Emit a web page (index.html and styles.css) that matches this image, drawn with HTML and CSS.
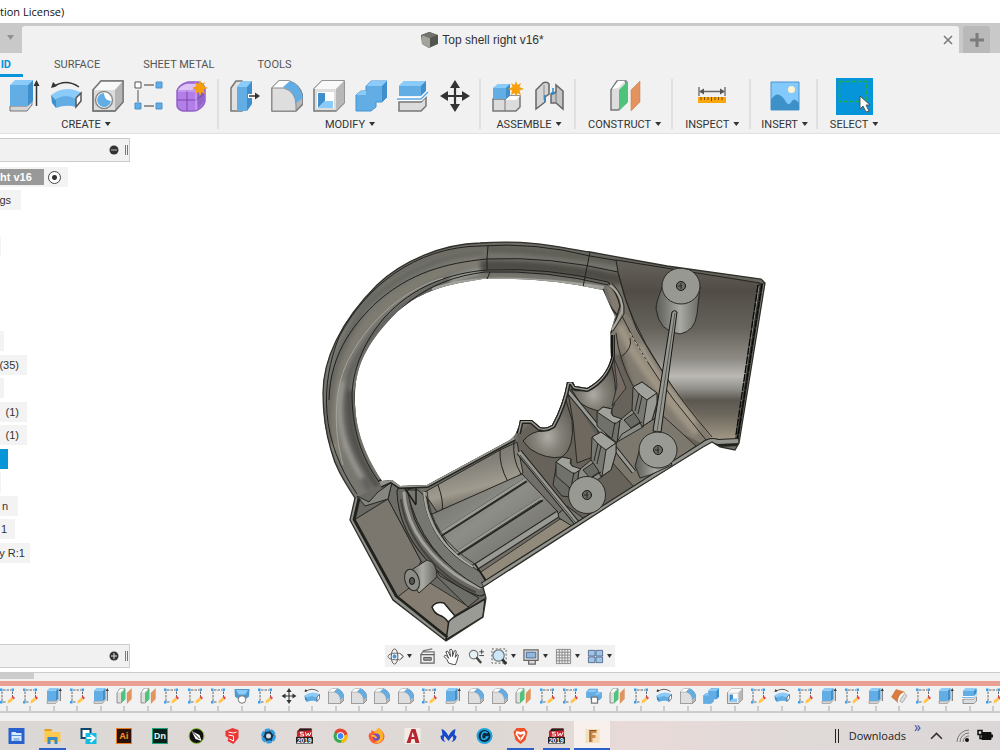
FILE: index.html
```html
<!DOCTYPE html>
<html lang="en">
<head>
<meta charset="utf-8">
<title>Top shell right v16*</title>
<link rel="stylesheet" href="styles.css">
</head>
<body>
<svg class="defs" aria-hidden="true">
  <defs>
    <symbol id="extrude" viewBox="0 0 32 32"><path d="M2 26h17l5-6v5l-5 6H2z" fill="#d5d5d5" stroke="#777"/><path d="M2 5h18v21H2z" fill="#63ade5"/><path d="M2 5l5-5h18l-5 5z" fill="#8bcbfa"/><path d="M20 5l5-5v21l-5 5z" fill="#3f8fcc"/><path d="M28.500 26V4" stroke="#333" stroke-width="1.500"/><path d="M25.500 6l3-6 3 6z" fill="#333"/></symbol>
    <symbol id="revolve" viewBox="0 0 32 32"><path d="M3 7Q16-2 29 7" fill="none" stroke="#333" stroke-width="1.500"/><path d="M1 8l2-6 4 4z" fill="#333"/><path d="M1 15Q15 4 32 13L26 19Q16 14 6 20z" fill="#8bcbfa"/><path d="M1 15l5 5v8l-4-5z" fill="#3f8fcc"/><path d="M6 19Q16 13 26 19v8Q16 24 6 28z" fill="#63ade5"/><path d="M26 18l5-5v8l-5 6z" fill="#fff" stroke="#555" stroke-width="1.500"/></symbol>
    <symbol id="hole" viewBox="0 0 32 32"><path d="M1 10l8-9h22v21l-8 9H1z" fill="#dcdcdc" stroke="#777" stroke-width="1.500"/><path d="M1 10l8-9h22l-8 9z" fill="#f8f8f8"/><path d="M23 10l8-9v21l-8 9z" fill="#b5b5b5"/><path d="M1 10l8-9h22v21l-8 9H1z" fill="none" stroke="#777" stroke-width="1.300"/><circle cx="12" cy="20" r="8.500" fill="#fff" stroke="#888" stroke-width="1.500"/><path d="M12 13a7 7 0 1 0 7 8q-7-1-7-8" fill="#63ade5"/></symbol>
    <symbol id="pattern" viewBox="0 0 32 32"><path d="M4 10v12M10 5h10M10 26h10" stroke="#777" stroke-width="1.300"/><path d="M1 2h6v6H1z" fill="#fff" stroke="#555"/><path d="M22 2h6v6h-6zM1 23h6v6H1zM22 23h6v6h-6z" fill="#63ade5" stroke="#4b92cb"/></symbol>
    <symbol id="star" viewBox="0 0 16 16"><path d="M8 0l1.500 4L13 2l-1.500 4L16 8l-4.500 1.500L13 14l-3.500-2L8 16l-1.500-4L3 14l1-4.500L0 8l4.500-2L3 2l3.500 2z" fill="#f6a00e"/></symbol>
    <symbol id="form" viewBox="0 0 32 32"><path d="M1 11q1-4 6-7l5-2h10q5 1 7 6v13q-1 5-6 8-2 2-6 2H7q-5-1-6-5z" fill="#b27ee8" stroke="#9361c5" stroke-width="1.500"/><path d="M2 10q2-4 8-6h12l-5 6z" fill="#ddc4f7"/><path d="M21 13l7-6v14l-6 8z" fill="#9264c8"/><path d="M11 10v21M1 20h19l8-6" stroke="#7c47ac" fill="none"/><path d="M20 10v20M2 11h18" stroke="#d4b2f7" fill="none"/><use href="#star" x="16" y="0" width="16" height="16"/></symbol>
    <symbol id="press" viewBox="0 0 32 32"><path d="M2 8l5-7h6v30H2z" fill="#e1e1e1" stroke="#777" stroke-width="1.500"/><path d="M8 7l5-6h10l-5 6v24H8z" fill="#63ade5"/><path d="M8 7l5-6h10l-5 6z" fill="#8bcbfa"/><path d="M18 7l5-6v23l-5 7z" fill="#3f8fcc"/><path d="M19 16h8" stroke="#fff" stroke-width="4"/><path d="M20 16h8" stroke="#333" stroke-width="1.500"/><path d="M26 12.500l5 3.500-5 3.500z" fill="#333"/></symbol>
    <symbol id="fillet" viewBox="0 0 32 32"><path d="M1 8l7-7h10q13 5 14 18v5l-7 7H1z" fill="#b9b9b9" stroke="#777" stroke-width="1.500"/><path d="M1 8l7-7h11l-7 7z" fill="#fff"/><path d="M1 8h12q12 4 12 17v6H1z" fill="#dedede" stroke="#888"/><path d="M12 7l7-6q11 4 13 17l-7 5Q24 11 12 7" fill="#63ade5"/></symbol>
    <symbol id="shell" viewBox="0 0 32 32"><path d="M1 9l8-8h22v22l-8 8H1z" fill="#dedede" stroke="#777" stroke-width="1.500"/><path d="M1 9l8-8h22l-8 8z" fill="#f9f9f9"/><path d="M23 9l8-8v22l-8 8z" fill="#b8b8b8"/><path d="M4 12h17v16H4z" fill="#fff"/><path d="M5 13h7v8l-7 7z" fill="#3f8fcc"/><path d="M5 28l7-7h8v7z" fill="#8bcbfa"/></symbol>
    <symbol id="combine" viewBox="0 0 32 32"><path d="M1 15l5-4h5V6l5-5h16v16l-5 5h-6v5l-5 4H1z" fill="#63ade5" stroke="#4594cf"/><path d="M11 6l5-5h16l-5 5zM1 15l5-4h5v4z" fill="#8bcbfa"/><path d="M27 6l5-5v16l-5 5z" fill="#3f8fcc"/></symbol>
    <symbol id="split" viewBox="0 0 32 32"><path d="M2 6l5-5h22v10l-5 5H2z" fill="#63ade5"/><path d="M2 6l5-5h22l-5 5z" fill="#8bcbfa"/><path d="M24 6l5-5v10l-5 5z" fill="#3f8fcc"/><path d="M2 22h22l5-5v9l-5 5H2z" fill="#dcdcdc" stroke="#777" stroke-width="1.500"/><path d="M0 19h24l7-7" fill="none" stroke="#fff" stroke-width="4"/><path d="M0 19h24l7-7" fill="none" stroke="#55a8e6" stroke-width="1.500"/></symbol>
    <symbol id="move" viewBox="0 0 32 32"><path d="M16 5v22M5 16h22" stroke="#333" stroke-width="2.200"/><path d="M16 0l5 8H11zM16 32l5-8H11zM1 16l8-5v10zM31 16l-8-5v10z" fill="#333"/></symbol>
    <symbol id="component" viewBox="0 0 32 32"><path d="M1 19h13l2-3h12v11l-4 4H1z" fill="#dcdcdc" stroke="#777" stroke-width="1.500"/><path d="M14 19l4-3h10l-4 4H14z" fill="#fff"/><path d="M13 19v12" stroke="#777"/><path d="M1 8l5-4h12v10l-4 5H1z" fill="#63ade5"/><path d="M1 8l5-4h12l-4 4z" fill="#8bcbfa"/><path d="M14 8l4-4v11l-4 4z" fill="#3f8fcc"/><use href="#star" x="16" y="1" width="16" height="16"/></symbol>
    <symbol id="joint" viewBox="0 0 32 32"><path d="M2 10l7-7q4-2 6 1v10l-4 3v5l-9 7z" fill="#d5d5d5" stroke="#666" stroke-width="1.500"/><path d="M10 5v15" stroke="#888" fill="none"/><path d="M17 14l5-2V5l7 6v18l-7-6h-5z" fill="#c4c4c4" stroke="#666" stroke-width="1.500"/><path d="M22 12v11" stroke="#777"/><path d="M11 15v7M19 8v7M17 13h5" stroke="#268ad0" stroke-width="1.500"/></symbol>
    <symbol id="plane" viewBox="0 0 32 32"><path d="M2 10l6-9h9v22l-8 7H2z" fill="#dedede" stroke="#777" stroke-width="1.500"/><path d="M9 8l7-7h-7l-6 8z" fill="#fff"/><path d="M10 10l9-9v21l-9 9z" fill="#4fc37a"/><path d="M22 10l9-9v21l-9 9z" fill="#e3935e" stroke="#ca7a46" stroke-width=".5"/></symbol>
    <symbol id="measure" viewBox="0 0 32 32"><path d="M3 7v9M29 7v9M6 11.500h20" stroke="#666" stroke-width="1.300"/><path d="M3 11.500l5-3v6zM29 11.500l-5-3v6z" fill="#555"/><path d="M2 17h28v6H2z" fill="#f9a70a"/><path d="M5 17v3M8.500 17v3M12 17v3M15.500 17v4M19 17v3M22.500 17v3M26 17v3" stroke="#795000"/></symbol>
    <symbol id="picture" viewBox="0 0 32 32"><path d="M2 2h28v28H2z" fill="#83c9fb" stroke="#4b95cd"/><circle cx="22.500" cy="9.500" r="3.500" fill="#fff2ce"/><path d="M2 20Q9 8 17 22q3 5 6-1 2-4 7 2v7H2z" fill="#3d90c8"/></symbol>
    <symbol id="select" viewBox="0 0 37 37"><path d="M0 0h37v37H0z" fill="#0795d9"/><path d="M3.500 3.500h27v20h-27z" fill="none" stroke="#1fae50" stroke-width="1.500" stroke-dasharray="4 2"/><path d="M24 18v13l3-3 3 6 3-1-3-6h4z" fill="#fff" stroke="#555"/></symbol>
    <symbol id="sketch" viewBox="0 0 32 32"><path d="M6 7v19M8 4h16M8 28h7M27 7v12" stroke="#666" stroke-width="2" stroke-dasharray="5 2"/><path d="M2 1h5v5H2zM25 1h5v5h-5zM2 26h5v5H2z" fill="#39a0f0"/><path d="M17 31l1-6 7-6 4 4-7 6z" fill="#ffc54b"/><path d="M25 18l3-2 4 4-3 3z" fill="#ed3e43"/></symbol>
    <symbol id="funnel" viewBox="0 0 32 32"><path d="M1 2h30l-1 15-5 4H7l-5-4z" fill="#4d98ce"/><path d="M4 4l5 9h14l5-9z" fill="#8bcbfa"/><circle cx="16" cy="23" r="7.500" fill="#fff" stroke="#777" stroke-width="2"/></symbol>
    <symbol id="cut" viewBox="0 0 32 32"><path d="M1 8l5-6h17v7h8v11l-5 4H10l-1-5H1z" fill="#63ade5" stroke="#438fca"/><path d="M2 8l5-5h15l-4 5zM17 13l5-4h8l-4 4z" fill="#8bcbfa"/><path d="M11 18h12v12H11z" fill="#fff" stroke="#777" stroke-width="2.500"/></symbol>
    <symbol id="offset" viewBox="0 0 32 32"><path d="M17 26l10-15q5 2 4 6l-8 12z" fill="#ddd" stroke="#777"/><path d="M1 18L10 3l17 5-9 9-4 12z" fill="#d87d42" stroke="#c36c35"/><path d="M15 28q0-12 11-18" fill="none" stroke="#fff" stroke-width="3"/></symbol>
    <linearGradient id="shellG" x1="0" y1="0" x2="0" y2="1"><stop offset="0" stop-color="#65625b"/><stop offset=".17" stop-color="#514d46"/><stop offset=".37" stop-color="#64615b"/><stop offset=".54" stop-color="#8d8a84"/><stop offset=".64" stop-color="#bbb9b4"/><stop offset=".71" stop-color="#8f8d88"/><stop offset=".77" stop-color="#5b5750"/><stop offset=".86" stop-color="#706a5f"/><stop offset="1" stop-color="#a79d8a"/></linearGradient>
    <linearGradient id="bossG" x1="0" x2="1"><stop offset="0" stop-color="#5e5d59"/><stop offset=".2" stop-color="#777772"/><stop offset=".55" stop-color="#a9aaa4"/><stop offset="1" stop-color="#686762"/></linearGradient>
    <linearGradient id="cylG" x1="0" y1="0" x2=".35" y2="1"><stop offset="0" stop-color="#67655e"/><stop offset=".45" stop-color="#83817a"/><stop offset=".75" stop-color="#a09b8f"/><stop offset="1" stop-color="#625d54"/></linearGradient>
    <linearGradient id="plateG" x1="0" y1="0" x2="1" y2="1"><stop offset="0" stop-color="#6b6a65"/><stop offset=".45" stop-color="#8d8e88"/><stop offset=".7" stop-color="#7b7a74"/><stop offset="1" stop-color="#5b5952"/></linearGradient>
    <radialGradient id="cupG" cx=".5" cy=".65" r=".65"><stop offset="0" stop-color="#aeada5"/><stop offset=".4" stop-color="#85827a"/><stop offset="1" stop-color="#5d5a53"/></radialGradient>
    <filter id="soft" x="-10%" y="-10%" width="120%" height="120%"><feGaussianBlur stdDeviation="2.200"/></filter>
    <clipPath id="bodyClip"><path clip-rule="evenodd" d="M323 393C323 360 340 322 377 285C402 261 442 244 480 243C535 239 565 249 590 252L667 266 761 279 765 283 739 443 735 450 720 447 712 442 703 447 618 500 483 587 486 598 483 617 446 641 393 600 350 520 355 498C342 478 335 466 331 450C325 430 323 415 323 393ZM355 393C356 363 370 339 397 312C423 289 450 284 483 279Q545 277 603 290L615 317 610 333 611 358Q606 378 587 388L575 386 573 382 567 382Q563 405 552 425Q546 429 540 427L532 420 520 420Q518 434 510 440L427 485 400 486 392 480 382 481C360 448 354 420 355 393Z"/></clipPath>
    <g id="clip" stroke="#292823" stroke-linejoin="round">
      <path d="M620 420l12-10 12 10-1 7-26 15z" fill="#8b8c86"/>
      <path d="M624 420l10-7 8 8-11 7z" fill="#696a64"/>
      <path d="M597 412l6-5 9 2 0 6 8 5-3 23-6-5-14-12z" fill="#70716b"/>
      <path d="M597 412l6-5 9 2-1 4 2 3 9 3-7 5z" fill="#a0a19a"/>
      <path d="M615 422l-3 16" fill="none"/>
      <path d="M633 387l9-5 15 11v10l-5 17-10 7-3-7-7-10z" fill="#787973"/>
      <path d="M633 387l9-5 15 11-10 7-8-6z" fill="#a0a19a"/>
      <path d="M647 400l10-7v10l-5 17-9 6z" fill="#989992"/>
      <path d="M639 393l-4 18M642 396l-4 18M617 442l5-8 20-12" fill="none"/>
    </g>
  </defs>
</svg>

<header class="titlebar">tion License)</header>

<div class="doc-tabs">
  <div class="quick"><button class="drop" aria-label="Redo options"></button></div>
  <div class="doc-tab">
    <h1 class="doc-title"><svg class="doc-icon" viewBox="0 0 17 16"><path d="M0 3l8-3 9 3v9l-9 4-7-4z" fill="#555550"/><path d="M1 3l8 3v10l-8-4z" fill="#a2a39b"/><path d="M1 3l8-3 7 3-7 3z" fill="#73736d"/></svg>Top shell right v16*</h1>
    <button class="close" aria-label="Close tab"><svg viewBox="0 0 10 10"><path d="M1 1l8 8M9 1L1 9" stroke="#777" stroke-width="1.500"/></svg></button>
  </div>
  <button class="new-tab" aria-label="New design"><svg viewBox="0 0 14 14"><path d="M7 0v14M0 7h14" stroke="#7c7c7c" stroke-width="3"/></svg></button>
</div>

<section class="ribbon">
  <nav class="modes"><button class="mode active">ID</button><button class="mode">SURFACE</button><button class="mode">SHEET METAL</button><button class="mode">TOOLS</button></nav>
  <div class="groups">
    <div class="group create"><div class="tools"><button aria-label="Extrude"><svg><use href="#extrude"/></svg></button><button aria-label="Revolve"><svg><use href="#revolve"/></svg></button><button aria-label="Hole"><svg><use href="#hole"/></svg></button><button aria-label="Pattern"><svg><use href="#pattern"/></svg></button><button aria-label="Create form"><svg><use href="#form"/></svg></button></div><button class="label">CREATE</button></div>
    <div class="group"><div class="tools"><button aria-label="Press pull"><svg><use href="#press"/></svg></button><button aria-label="Fillet"><svg><use href="#fillet"/></svg></button><button aria-label="Shell"><svg><use href="#shell"/></svg></button><button aria-label="Combine"><svg><use href="#combine"/></svg></button><button aria-label="Split body"><svg><use href="#split"/></svg></button><button aria-label="Move"><svg><use href="#move"/></svg></button></div><button class="label">MODIFY</button></div>
    <div class="group assemble"><div class="tools"><button aria-label="New component"><svg><use href="#component"/></svg></button><button aria-label="Joint"><svg><use href="#joint"/></svg></button></div><button class="label">ASSEMBLE</button></div>
    <div class="group wide"><div class="tools"><button aria-label="Offset plane"><svg><use href="#plane"/></svg></button></div><button class="label">CONSTRUCT</button></div>
    <div class="group wide"><div class="tools"><button aria-label="Measure"><svg><use href="#measure"/></svg></button></div><button class="label">INSPECT</button></div>
    <div class="group wide tight"><div class="tools"><button aria-label="Canvas image"><svg><use href="#picture"/></svg></button></div><button class="label">INSERT</button></div>
    <div class="group wide"><div class="tools large"><button aria-label="Select"><svg><use href="#select"/></svg></button></div><button class="label">SELECT</button></div>
  </div>
</section>

<main class="canvas">
  <aside class="side">
    <div class="panel-head"><button aria-label="Collapse browser"><svg viewBox="0 0 10 10"><circle cx="5" cy="5" r="4.500" fill="#333"/><path d="M2 5h6" stroke="#bbb"/></svg></button><i class="grip"></i></div>
    <ul class="tree">
      <li class="root"><b>ht v16</b><label><input type="radio" checked aria-label="Activate component"></label></li>
      <li class="w21">gs</li><li class="w0"></li><li class="w1"></li><li class="w0"></li><li class="w0"></li><li class="w0"></li><li class="w4"></li>
      <li class="w27">(35)</li><li class="w4"></li><li class="w27">(1)</li><li class="w27">(1)</li><li class="w8 picked"></li><li class="w1"></li><li class="w18">n</li><li class="w15">1</li><li class="w30">y R:1</li>
    </ul>
    <div class="panel-head comments"><button aria-label="Expand comments"><svg viewBox="0 0 10 10"><circle cx="5" cy="5" r="4.500" fill="#333"/><path d="M2 5h6M5 2v6" stroke="#ddd"/></svg></button><i class="grip"></i></div>
  </aside>
  <div class="stage">
    <svg class="model" viewBox="310 230 470 420" role="img" aria-label="Top shell right model">
      <g clip-path="url(#bodyClip)" stroke-linejoin="round">
        <path d="M310 230h470v420H310z" fill="#716e67"/>
        <!-- handle bands -->
        <path d="M357 500C290 390 332 340 377 290C405 266 445 251 483 249Q550 247 620 263L600 295Q540 275 483 279C440 283 370 320 355 393Q356 440 385 485z" fill="#777770"/>
        <g fill="none" filter="url(#soft)">
          <path d="M480 266Q550 264 622 280" stroke="#4e4c45" stroke-width="11"/>
          <path d="M487 249Q550 248 760 285" stroke="#5f5e57" stroke-width="8"/>
          <path d="M340 458C324 405 335 360 371 320C408 283 440 267 480 262" stroke="#7f7b71" stroke-width="8"/>
          <path d="M334 450C324 405 328 370 350 335" stroke="#958c80" stroke-width="5"/>
          <path d="M331 445C321 390 340 345 367 304C400 273 440 255 484 252" stroke="#666660" stroke-width="6"/>
          <path d="M348 450C336 405 342 378 362 345C390 304 425 286 480 271" stroke="#a0a09b" stroke-width="5"/>
          <path d="M370 490C343 445 340 405 350 373C368 326 408 297 450 280" stroke="#62615d" stroke-width="7"/>
          <path d="M362 478C345 450 334 420 343 382" stroke="#b0ada7" stroke-width="3"/>
          <path d="M378 487C356 455 349 430 350 390" stroke="#4b4945" stroke-width="5"/>
        </g>
        <path d="M432 288Q480 268 604 286L603 295H432z" fill="#a3a39d"/>
        <g fill="none" stroke="#20211e" stroke-width="1">
          <path d="M357 494C320 440 320 385 339 337C365 287 415 247 480 246Q535 242 590 256L758 284"/>
          <path d="M329 400C330 350 358 320 377 302C410 273 445 263 487 259Q550 256 618 272"/>
          <path d="M382 486C359 456 352 425 352 393C354 365 365 341 384 318C413 286 450 273 487 270Q548 267 608 282"/>
          <path d="M384 482C362 450 355 420 355 393C358 355 383 325 410 301C433 284 455 276 485 272Q548 270 608 285"/>
          <path d="M488 246l-1 13v11M490 272l-3 7M590 252l-3 15-4 20"/>
        </g>
        <path d="M343 465C333 430 333 385 351 355C371 318 406 289 443 278" fill="none" stroke="#a5a49e"/>
        <!-- flared shell -->
        <path d="M618 272l-2-12L760 283l-22 159-26 0Q668 384 637 330Q625 302 618 272z" fill="url(#shellG)" stroke="#24231f"/>
        <path d="M606 285Q621 296 622 310L630 318Q653 365 711 438L689 456 644 456 619 400 610 333 615 315z" fill="#817b70"/>
        <g filter="url(#soft)" fill="none"><path d="M620 325Q633 361 697 433" stroke="#a09685" stroke-width="8"/><path d="M640 345Q659 380 696 422" stroke="#b5ab9a" stroke-width="3"/><path d="M618 355Q626 396 654 430" stroke="#5f5951" stroke-width="10"/></g>
        <g fill="none" stroke="#2c2a25">
          <path d="M618 273Q628 319 661 369Q680 400 712 437M622 316Q642 358 674 400L706 440M616 333Q619 360 633 386L676 435Q685 446 694 447M630 338q3 10-9 19"/>
          <path d="M603 289Q606 303 617 315M608 282Q618 294 620 306L614 326 611 333" stroke-width="1.500"/>
          <path d="M610 285Q624 297 622 312L612 330" stroke="#a9a9a1" stroke-width="2"/><path d="M612 283Q626 298 624 314L613 331"/>
          <path d="M630 333Q640 350 648 363" stroke="#ccc3b0" stroke-dasharray="3 2"/>
        </g>
        <g fill="none"><path d="M762 283l-24 160" stroke="#383832" stroke-width="7"/><path d="M764 284l-25 158M759 286l-23 150" stroke="#9a9a93"/><path d="M762 284l-25 158M758 285l-22 150" stroke="#090909" stroke-width="1.400" stroke-dasharray="8 1"/></g>
        <!-- grip pockets -->
        <path d="M517 435L570 388 618 355 630 385 655 420 705 445 578 525 520 460z" fill="#67625a"/>
        <path d="M571 389q9 5 25-3 15-10 15-24 6 24 4 37 0 13-12 13-19-4-24-11z" fill="url(#cupG)" stroke="#272621"/>
        <path d="M523 441q8-10 20-10 13-1 22-34l7 23q3 28-10 37-15 3-32-8z" fill="url(#cupG)" stroke="#272621"/>
        <path d="M568 392l43 58-34 13-4-42z" fill="#6e685f" stroke="#2a2924"/>
        <path d="M572 397l26 30-2 8z" fill="#5d5d58"/>
        <path d="M610 442l52-27 34 31-61 42-24-27z" fill="#7d786e" stroke="#302e2a"/>
        <path d="M568 391l42 51 24 30" fill="none" stroke="#22221f" stroke-width="5"/><path d="M568 391l42 51 24 30" fill="none" stroke="#999a93" stroke-width="3"/>
        <path d="M614 358l3 28-5 20 14-18-12-30" fill="#756b62" stroke="#333"/>
        <path d="M611 335v21Q606 378 587 388l-12-2-3-5-5 1Q563 405 552 425q-6 4-12 2l-8-7-12 0-3 13" fill="none" stroke="#22221f" stroke-width="8"/>
        <path d="M611 335v21Q606 378 587 388l-12-2-3-5-5 1Q563 405 552 425q-6 4-12 2l-8-7-12 0-3 13" fill="none" stroke="#9a9a92" stroke-width="5"/>
        <path d="M612 335v21Q606 378 587 388l-12-2-3-5-5 1Q563 405 552 425q-6 4-12 2l-8-7-12 0-3 13" fill="none" stroke="#151513" stroke-width="2"/>
        <use href="#clip"/>
        <path d="M553 485l4-24 11 8 2 28-8-1z" fill="#696a64" stroke="#292823"/>
        <use href="#clip" x="-41" y="50"/>
        <!-- battery bay -->
        <path d="M514 440L418 490 409 488 440 557 484 588 579 525 523 460z" fill="#716f68"/>
        <path d="M423 493l77-43 17-8 6 31-16 10-70 29-8-12z" fill="url(#cylG)" stroke="#282722"/>
        <path d="M438 485q6 16 4 27M500 450q-1 15 8 32M514 441q-2 18 7 33" fill="none" stroke="#23221f"/>
        <path d="M430 515l92-41 36 38-85 54-17-9-16-24z" fill="url(#plateG)" stroke="#272621"/>
        <g fill="none"><path d="M440 535l86-55M455 555l87-56" stroke="#242421" stroke-width="5"/><path d="M440 534l86-55M455 554l87-56" stroke="#999a94" stroke-width="3"/><path d="M442 535l84-54M456 555l85-55" stroke="#343430"/></g>
        <path d="M478 574l82-55 16 5-90 58z" fill="#91897a" stroke="#34312c"/>
        <path d="M474 568l84-54" fill="none" stroke="#242421" stroke-width="7"/><path d="M474 568l84-54" fill="none" stroke="#999a94" stroke-width="5"/>
        <path d="M558 514l9-8 24 18-14 5-18-11z" fill="#777872" stroke="#262622"/>
        <path d="M519 452l61 75" fill="none" stroke="#22221f" stroke-width="6"/><path d="M519 452l61 75" fill="none" stroke="#969790" stroke-width="4"/><path d="M520 455l60 73" stroke="#44443f" fill="none"/>
        <!-- bottom foot and round channel -->
        <path d="M351 521l6-24 31-15 10 7 91 102-4 28-40 22-55-42z" fill="#6a6964"/>
        <path d="M354 520l34-21 33 62-14 31-12 7z" fill="#7b776e" stroke="#252420"/>
        <path d="M395 599l27-21 47 29-20 12-2 17z" fill="#857d71" stroke="#302e29"/>
        <path d="M388 499l4-17 9 7 10 42 29 45 39 22-11 9-47-46z" fill="#6d6d68" stroke="#292824"/>
        <path d="M357 496l8 10 23-7 4-17-14 10-9 10z" fill="#85867f" stroke="#272622"/>
        <g fill="none" stroke-linecap="round"><path d="M403 492C405 541 447 577 480 590" stroke="#22221f" stroke-width="13"/><path d="M403 492C405 541 447 577 480 590" stroke="#686761" stroke-width="11"/><path d="M404 493C407 539 448 575 480 588" stroke="#a3a39d" stroke-width="3"/><path d="M401 500C407 544 445 580 475 592" stroke="#45433e" stroke-width="2"/></g>
        <path d="M418 490l9 8 2 12q13 38 44 57l7 5 7 12-6 4Q421 555 407 490z" fill="#777771" stroke="#252421"/>
        <path d="M423 494q7 51 50 74M427 491q3 45 48 73" fill="none" stroke="#33322e"/><path d="M424 492q4 48 49 75" fill="none" stroke="#a8a8a0" stroke-width="2"/>
        <path d="M404 487l12 18M408 489l8-2v17M475 564l12 18" fill="none" stroke="#1e1e1a" stroke-width="1.500"/>
        <path d="M449 620l36-21-2 18-37 23z" fill="#999b94" stroke="#20201c" stroke-width="1.500"/>
        <path d="M405 574l22-14q10 2 10 17l-18 16z" fill="url(#bossG)" stroke="#272722"/><ellipse cx="412" cy="580" rx="7" ry="11" transform="rotate(-18 412 580)" fill="#8b8c85" stroke="#272722"/><ellipse cx="412" cy="581" rx="2.500" ry="3.500" fill="#595954" stroke="#111"/>
        <path d="M432 607q4-6 12-4l11 13-7 6q-3-5-9-7-5-2-7-8z" fill="#fff" stroke="#22221e" stroke-width="1.500"/>
        <!-- edge rims -->
        <path d="M483 586L703 446Q710 440 718 443l20-1" fill="none" stroke="#22221f" stroke-width="8"/><path d="M483 585L703 445Q710 439 718 442l20-1" fill="none" stroke="#94958e" stroke-width="4"/>
        <path d="M514 437L427 484 400 485 391 479 380 484" fill="none" stroke="#22221f" stroke-width="8"/><path d="M514 437L427 484 400 485 391 479 380 484" fill="none" stroke="#94958e" stroke-width="5"/>
        <path d="M357 498l-5 22 43 78 51 41" fill="none" stroke="#20201c" stroke-width="7"/><path d="M356 498l-5 22 43 78 51 41" fill="none" stroke="#8f908a" stroke-width="3"/>
        <!-- screw bosses and strut -->
        <path d="M663 286q-7 15-7 23 3 23 24 25 15-3 17-20l3-27z" fill="url(#bossG)" stroke="#292925"/>
        <ellipse cx="681" cy="286" rx="19" ry="18" fill="#979891" stroke="#2b2b27"/>
        <path d="M640 448l-5 18 5 12 10-3 22-10-5-16z" fill="url(#bossG)" stroke="#292925"/>
        <ellipse cx="658" cy="450" rx="19" ry="18" fill="#999a93" stroke="#2b2b27"/><circle cx="587" cy="495" r="18.500" fill="#989992" stroke="#2b2b27"/>
        <path d="M672 312q3-3 5 0l-16 120-8-1z" fill="#969791" stroke="#151513"/><path d="M675 313l-18 119" stroke="#555650"/>
        <g fill="#6a6b65" stroke="#151513"><circle cx="681" cy="286" r="4.500"/><circle cx="658" cy="450" r="4.500"/><circle cx="587" cy="495" r="4.500"/></g><path d="M681 283v6M678 286h4M658 447v6M655 450h4M587 492v6M584 495h4" stroke="#292925"/>
      </g>
      <path fill="none" stroke="#30312c" stroke-width="1.300" d="M323 393C323 360 340 322 377 285C402 261 442 244 480 243C535 239 565 249 590 252L667 266 761 279 765 283 739 443 735 450 720 447 712 442 703 447 618 500 483 587 486 598 483 617 446 641 393 600 350 520 355 498C342 478 335 466 331 450C325 430 323 415 323 393Z"/>
    </svg>
  </div>
  <div class="navbar">
    <button class="has-menu" aria-label="Orbit"><svg viewBox="0 0 18 18"><ellipse cx="9" cy="9" rx="8" ry="3.500" fill="none" stroke="#666"/><ellipse cx="8" cy="9" rx="3.500" ry="8" fill="none" stroke="#555"/><circle cx="8" cy="9" r="2" fill="#369ae5"/><path d="M13 5l4 4-4 4" fill="#fff" stroke="#555"/></svg></button>
    <button aria-label="Look at"><svg viewBox="0 0 18 18"><path d="M2 7l2-3h12v3M4 3l10-2" fill="none" stroke="#777" stroke-width="1.300"/><path d="M2 7h14v9H2z" fill="#eee" stroke="#666" stroke-width="1.300"/><path d="M5 10h8v3H5z" fill="#999" stroke="#555"/></svg></button>
    <button aria-label="Pan"><svg viewBox="0 0 18 18"><path d="M6 16q-1-4-5-7 2-3 5 2L3 4q2-2 3 1l2 4-1-7q2-2 3 1v6l2-6q2-1 2 1l-1 6 2-3q2 0 1 2-1 5-3 9z" fill="#fff" stroke="#444"/></svg></button>
    <button aria-label="Zoom"><svg viewBox="0 0 18 18"><circle cx="7" cy="7" r="4.500" fill="#e6f1f7" stroke="#777" stroke-width="1.300"/><path d="M10 10l5 6" stroke="#444" stroke-width="2.500"/><path d="M13 4h5M15.500 1.500v5M13 8h5" stroke="#444"/></svg></button>
    <button class="has-menu" aria-label="Zoom window"><svg viewBox="0 0 18 18"><path d="M1 1h15v15H1z" fill="none" stroke="#555" stroke-dasharray="2 2"/><circle cx="8" cy="8" r="6" fill="#cce7f7" stroke="#777" stroke-width="1.300"/><path d="M12 12l4 5" stroke="#333" stroke-width="3"/></svg></button>
    <button class="has-menu" aria-label="Display settings"><svg viewBox="0 0 18 18"><path d="M1 2h15v11H1zM6 13v4h7v-4" fill="#ddd" stroke="#666" stroke-width="1.300"/><path d="M3.500 4.500h10v6h-10z" fill="#91b7db" stroke="#436b99"/></svg></button>
    <button class="has-menu" aria-label="Grid settings"><svg viewBox="0 0 18 18"><path d="M1.500 1.500h15v15h-15zM4.500 1v15M7.500 1v15M10.500 1v15M13.500 1v15M1 4.500h15M1 7.500h15M1 10.500h15M1 13.500h15" fill="#eee" stroke="#888"/></svg></button>
    <button class="has-menu" aria-label="Viewports"><svg viewBox="0 0 18 18"><path d="M1.500 2.500h7v6h-7zM9.500 2.500h7v6h-7zM1.500 9.500h7v6h-7zM9.500 9.500h7v6h-7z" fill="#9dc5e5" stroke="#5a7090"/></svg></button>
  </div>
</main>

<section class="timeline" aria-label="Timeline">
  <div class="scroll"><i class="thumb"></i></div>
  <div class="range"></div>
  <ol class="steps">
    <li><svg><use href="#sketch"/></svg></li><li><svg><use href="#sketch"/></svg></li><li><svg><use href="#extrude"/></svg></li><li><svg><use href="#sketch"/></svg></li><li><svg><use href="#extrude"/></svg></li><li><svg><use href="#plane"/></svg></li><li><svg><use href="#plane"/></svg></li><li><svg><use href="#sketch"/></svg></li><li><svg><use href="#sketch"/></svg></li><li><svg><use href="#sketch"/></svg></li><li><svg><use href="#funnel"/></svg></li>
    <li><svg><use href="#sketch"/></svg></li><li><svg><use href="#move"/></svg></li><li><svg><use href="#revolve"/></svg></li><li><svg><use href="#fillet"/></svg></li><li><svg><use href="#fillet"/></svg></li><li><svg><use href="#fillet"/></svg></li><li><svg><use href="#fillet"/></svg></li><li><svg><use href="#sketch"/></svg></li><li><svg><use href="#extrude"/></svg></li><li><svg><use href="#fillet"/></svg></li><li><svg><use href="#fillet"/></svg></li>
    <li><svg><use href="#plane"/></svg></li><li><svg><use href="#sketch"/></svg></li><li><svg><use href="#sketch"/></svg></li><li><svg><use href="#cut"/></svg></li><li><svg><use href="#plane"/></svg></li><li><svg><use href="#sketch"/></svg></li><li><svg><use href="#revolve"/></svg></li><li><svg><use href="#fillet"/></svg></li><li><svg><use href="#combine"/></svg></li><li><svg><use href="#shell"/></svg></li><li><svg><use href="#sketch"/></svg></li>
    <li><svg><use href="#revolve"/></svg></li><li><svg><use href="#sketch"/></svg></li><li><svg><use href="#extrude"/></svg></li><li><svg><use href="#sketch"/></svg></li><li><svg><use href="#extrude"/></svg></li><li><svg><use href="#offset"/></svg></li><li><svg><use href="#sketch"/></svg></li><li><svg><use href="#extrude"/></svg></li><li><svg><use href="#split"/></svg></li><li><svg><use href="#sketch"/></svg></li>
  </ol>
</section>

<footer class="taskbar">
  <div class="apps">
    <button aria-label="File manager"><svg viewBox="0 0 16 16"><path d="M0 0h16v16H0z" fill="#2860ce"/><path d="M3 4h4l1 1h5v8H3z" fill="#d6ebff"/><path d="M3 7h10v1H3z" fill="#4e91d8"/><path d="M5 10h6v3H5z" fill="#8fb9ee"/></svg></button>
    <button class="open" aria-label="File Explorer"><svg viewBox="0 0 16 16"><path d="M0 1h7l1 3h8v10H0z" fill="#ffc84e"/><path d="M0 1h7v2H0z" fill="#e3a01f"/><path d="M3 16V9h10v7h-3v-4H6v4z" fill="#388bc4"/></svg></button>
    <button aria-label="Remote transfer"><svg viewBox="0 0 16 16"><path d="M1 1h9v9H1z" fill="#fff" stroke="#12456a" stroke-width="2"/><path d="M5 5h11v11H5z" fill="#13bce2"/><path d="M6 10h7M10 7l4 3-4 4" fill="none" stroke="#fff" stroke-width="2"/></svg></button>
    <button class="app-text ai" aria-label="Illustrator">Ai</button>
    <button class="app-text dn" aria-label="Dimension">Dn</button>
    <button aria-label="Graphics suite"><svg viewBox="0 0 16 16"><circle cx="8" cy="8" r="7.500" fill="#111" stroke="#8ec83d"/><path d="M3 3l8 4 2 6-6-2z" fill="#fff"/><path d="M4 4l7 7" stroke="#111"/></svg></button>
    <button aria-label="SketchUp"><svg viewBox="0 0 16 16"><path d="M1 3l7-3 6 2v8l-5 6-6-3 1-3-3-2z" fill="#e93735"/><path d="M4 4l5 1 3-1M4 7l5 1v5M5 11l4 2" fill="none" stroke="#fff"/></svg></button>
    <button aria-label="Camera tool"><svg viewBox="0 0 16 16"><circle cx="8" cy="8" r="6" fill="#183149" stroke="#309de2" stroke-width="3" stroke-dasharray="5 1"/><circle cx="8" cy="8" r="2.500" fill="#d3dfe7"/></svg></button>
    <button aria-label="SolidWorks 2019"><svg viewBox="0 0 18 16"><path d="M1 3l3-3h13v12H1z" fill="#c9272d"/><path d="M2 3l2-3h12v2z" fill="#222"/><path d="M4 4h4M5 4v2h3v2H4M10 4l1 4 2-3 1 3 2-4" stroke="#fff" fill="none"/><path d="M0 9h18v7H0z" fill="#222"/><text x="1" y="15" class="year">2019</text></svg></button>
    <button aria-label="Chrome"><svg viewBox="0 0 16 16"><circle cx="8" cy="8" r="7" fill="#36a852"/><path d="M2 4a7 7 0 0 1 13 4H8z" fill="#e84335"/><path d="M15 6a7 7 0 0 1-7 9l3-7z" fill="#fbbc05"/><circle cx="8" cy="8" r="3.500" fill="#4285f4" stroke="#fff"/></svg></button>
    <button aria-label="Firefox"><svg viewBox="0 0 16 16"><path d="M1 5q2 1 2-3 2 2 5 1l2-3q6 4 6 9-1 6-8 7-7-1-8-8z" fill="#ff5938"/><path d="M5 4l5-4q7 5 4 12-3 4-8 3 6-4 4-8z" fill="#ffb32c"/><circle cx="8" cy="9" r="3.500" fill="#7050bd"/><path d="M3 8q3-1 5 2" fill="none" stroke="#ffb32c" stroke-width="2"/></svg></button>
    <button aria-label="AutoCAD"><svg viewBox="0 0 16 16"><path d="M0 0h16v16H0z" fill="#f4ece4"/><path d="M2 15L7 1h4l4 14h-4l-1-4H7l-1 4z" fill="#b52630"/><path d="M8 4l-1 5h3z" fill="#f4ece4"/></svg></button>
    <button aria-label="Malwarebytes"><svg viewBox="0 0 16 16"><path d="M1 1q4 1 7 7 3-6 7-7l-1 6 2 1q0 5-5 6 3-3 1-6-2 2-4 5-2-3-4-5-2 3 1 6-5-1-5-6l2-1z" fill="#1748c9"/></svg></button>
    <button aria-label="Cleaner"><svg viewBox="0 0 16 16"><circle cx="8" cy="8" r="7" fill="#082a43" stroke="#20a6df" stroke-width="2"/><path d="M11 5q-3-2-5 0-2 4 0 6 3 1 5-2H9" fill="none" stroke="#27b3ed" stroke-width="1.500"/></svg></button>
    <button class="open" aria-label="Brave"><svg viewBox="0 0 16 16"><path d="M4 0h8l3 4-2 8-5 4-5-4-2-8z" fill="#f15128"/><path d="M4 3l4 1 4-1 1 3-3 5-2 2-2-2-3-5z" fill="#fff"/><path d="M5 6l3 1 3-1-2 3H7zM8 9v3" fill="#f15128" stroke="#f15128" stroke-width=".5"/></svg></button>
    <button class="open" aria-label="SolidWorks 2019"><svg viewBox="0 0 18 16"><path d="M1 3l3-3h13v12H1z" fill="#c9272d"/><path d="M2 3l2-3h12v2z" fill="#222"/><path d="M4 4h4M5 4v2h3v2H4M10 4l1 4 2-3 1 3 2-4" stroke="#fff" fill="none"/><path d="M0 9h18v7H0z" fill="#222"/><text x="1" y="15" class="year">2019</text></svg></button>
    <button class="open current" aria-label="Fusion 360"><svg viewBox="0 0 16 16"><path d="M1 1h14v14H1z" fill="#f5dfba"/><path d="M5 2h7v3H8v2h3v3H8v4H5z" fill="#c98a4c"/><path d="M5 2h7v1H6v11H5z" fill="#865124"/></svg></button>
  </div>
  <div class="tray"><i class="handle"></i><span>Downloads</span><a href="#more" class="more">»</a>
    <button aria-label="Show hidden icons"><svg viewBox="0 0 12 8"><path d="M1 7l5-5 5 5" fill="none" stroke="#333" stroke-width="1.500"/></svg></button>
    <button aria-label="Network"><svg viewBox="0 0 13 13"><path d="M1 13A12 12 0 0 1 13 1M4 13a9 9 0 0 1 9-9M7 13a6 6 0 0 1 6-6" fill="none" stroke="#777"/><circle cx="11" cy="11" r="2" fill="#111"/></svg></button>
    <button aria-label="Battery"><svg class="battery" viewBox="0 0 16 12"><path d="M1 1h4v4H1zM3 5v4h2" fill="none" stroke="#111" stroke-width="1.500"/><path d="M5 3h9v7H5z" fill="#111" stroke="#111"/><path d="M15 5v3" stroke="#111" stroke-width="2"/></svg></button>
  </div>
</footer>
</body>
</html>
```
FILE: styles.css
```css
* { box-sizing: border-box; }
body { margin: 0; min-height: 100vh; display: flex; flex-direction: column; overflow-x: hidden; background: #fff; color: #333; font-family: Roboto, "Liberation Sans", sans-serif; font-size: 11px; }
button { border: 0; padding: 0; margin: 0; background: none; color: inherit; font: inherit; display: flex; align-items: center; justify-content: center; }
svg { display: block; flex: none; }
.defs { position: absolute; width: 0; height: 0; }
ul, ol { list-style: none; margin: 0; padding: 0; }

.titlebar { height: 23px; line-height: 23px; font-family: "Open Sans", sans-serif; font-size: 11px; color: #111; white-space: nowrap; }

.doc-tabs { display: flex; height: 31px; padding-top: 3px; background: linear-gradient(#c9c9c9 30px, #f1f1f1 30px); }
.quick { width: 22px; display: flex; justify-content: flex-end; padding: 9px 8px 0 0; }
.drop { width: 7px; height: 5px; background: #929292; clip-path: polygon(0 0, 100% 0, 50% 100%); }
.doc-tab { flex: 1; display: flex; align-items: center; background: #f1f1f1; border-radius: 3px 3px 0 0; padding-right: 6px; }
.doc-title { flex: 1; margin: 0; display: flex; align-items: center; justify-content: center; gap: 4px; font-size: 12px; font-weight: 400; font-family: "Liberation Sans", sans-serif; }
.doc-icon { width: 17px; height: 16px; }
.close svg { width: 10px; height: 10px; }
.new-tab { width: 27px; height: 27px; margin: 0 10px 0 4px; background: #b9b9b9; border-radius: 3px 3px 0 0; }
.new-tab svg { width: 14px; height: 14px; }

.ribbon { background: #f1f1f1; border-bottom: 1px solid #e1e1e1; overflow: hidden; }
.modes { display: flex; gap: 19px; height: 23px; }
.mode { padding: 0 12px; border-bottom: 3px solid transparent; color: #555; white-space: nowrap; }
.mode.active { width: 23px; padding-left: 0; justify-content: flex-end; font-weight: 700; color: #0795d9; border-color: #0795d9; }
.groups { display: flex; height: 56px; }
.group { display: flex; flex-direction: column; align-items: center; padding: 0 10px; position: relative; }
.group::after { content: ""; position: absolute; right: 0; top: 2px; bottom: 4px; width: 2px; background: #e0e0e0; }
.group:last-child::after { display: none; }
.group.create { width: 265px; margin-left: -46px; padding-right: 11px; }
.group.assemble { padding: 0 10px 0 11px; }
.group.wide { padding: 0 12px; }
.group.tight { padding: 0 10px; }
.tools { display: flex; align-self: stretch; justify-content: flex-end; align-items: center; gap: 10px; height: 38px; }
.wide .tools { justify-content: center; }
.tools svg { width: 32px; height: 32px; }
.tools.large svg { width: 37px; height: 37px; }
.label { height: 18px; gap: 4px; white-space: nowrap; }
.label::after { content: ""; width: 6px; height: 4px; background: #333; clip-path: polygon(0 0, 100% 0, 50% 100%); }

.canvas { flex: 1; position: relative; display: flex; background: #fff; font-family: "Liberation Sans", sans-serif; min-height: 538px; }
.side { width: 130px; display: flex; flex-direction: column; padding: 4px 0; }
.panel-head { height: 24px; display: flex; align-items: center; justify-content: flex-end; gap: 6px; background: #f1f1f1; border: solid #ccc; border-width: 1px 1px 1px 0; padding-right: 1px; }
.comments { margin-top: auto; }
.panel-head svg { width: 10px; height: 10px; }
.grip { width: 3px; height: 10px; border: solid #777; border-width: 0 1px; }
.tree { padding-top: 5px; }
.tree li { height: 20px; margin-bottom: 3px; background: #f3f3f3; display: flex; align-items: center; justify-content: flex-end; padding-right: 10px; white-space: nowrap; }
.tree li:nth-child(even) { margin-bottom: 4px; }
.tree .root { width: 68px; padding: 0 7px 0 0; gap: 4px; justify-content: flex-start; }
.root b { width: 44px; height: 16px; line-height: 16px; background: #999; color: #fff; }
.root label { display: flex; }
.root input { appearance: none; margin: 0; width: 13px; height: 13px; border: 1px solid #444; border-radius: 50%; background: radial-gradient(circle, #333 2px, #fff 3px); }
.tree .w0, .tree .w1, .tree .w4, .tree .w8 { padding: 0; }
.w0 { width: 0; } .w1 { width: 1px; } .w4 { width: 4px; } .w8 { width: 8px; }
.w15 { width: 15px; } .w18 { width: 18px; } .w21 { width: 21px; } .w27 { width: 27px; } .w30 { width: 30px; }
.tree .w15 { padding-right: 8px; }
.tree .w27 { padding-right: 8px; }
.tree .w30 { padding-right: 5px; }
.tree .picked { background: #0795d9; }
.stage { flex: 1; display: flex; align-items: flex-start; justify-content: center; padding: 96px 40px 0 0; }
.model { width: 470px; height: 420px; }
.navbar { position: absolute; left: 0; right: 0; bottom: 5px; width: 230px; height: 22px; margin: 0 auto; padding: 0 3px 0 2px; background: #f1f1f1; display: flex; align-items: center; justify-content: space-between; }
.navbar button { gap: 3px; }
.navbar svg { width: 17px; height: 17px; }
.has-menu::after { content: ""; width: 5px; height: 4px; background: #333; clip-path: polygon(0 0, 100% 0, 50% 100%); }

.timeline { background: #f1f1f1; overflow: hidden; padding-bottom: 8px; border-top: 1px solid #ccc; }
.scroll { height: 8px; }
.thumb { display: block; width: 34px; height: 6px; background: #ccc; }
.range { height: 5px; background: #e9a093; }
.steps { display: flex; height: 27px; margin: 0 -5px; border-bottom: 2px solid #ccc; }
.steps li { flex: 1; display: flex; flex-direction: column; align-items: center; justify-content: space-between; padding-top: 2px; }
.steps svg { width: 16px; height: 16px; }
.steps li::after { content: ""; width: 2px; height: 5px; background: #ccc; }

.taskbar { height: 29px; display: flex; justify-content: space-between; background: linear-gradient(90deg, #dad7d4, #e0dad8 30%, #ddd8d4 48%, #e8dad8 64%, #dfd9d8 80%, #dcd7d7); font-family: "Open Sans", sans-serif; font-size: 11px; color: #222; }
.apps { display: flex; margin-left: -2px; }
.apps button { width: 36px; }
.apps svg { width: 17px; height: 16px; }
.apps .open { background: linear-gradient(#2c5fc9, #2c5fc9) center bottom / 27px 2px no-repeat; }
.apps .current { background: linear-gradient(#f7f0ed 27px, #2c5fc9 27px); }
.apps .app-text { width: 16px; height: 16px; align-self: center; margin: 0 10px; border: 1px solid #e77b20; background: #2b1109; color: #f58b2a; font-size: 9px; font-weight: 700; }
.apps .app-text.dn { border-color: #18a475; background: #08211d; color: #d5eee7; }
.year { font: 700 7px "Liberation Sans", sans-serif; fill: #fff; }
.tray { display: flex; align-items: center; padding-right: 7px; }
.tray .handle { width: 4px; height: 14px; border: solid #222; border-width: 0 1px; margin-right: 10px; }
.more { align-self: flex-start; margin: 0 9px 0 8px; color: #2d50a5; font-size: 14px; line-height: 12px; text-decoration: none; }
.tray button + button { margin-left: 13px; }
.tray button:last-child { margin-left: 8px; }
.tray svg { width: 13px; height: 13px; }
.tray .battery { width: 16px; }
```
